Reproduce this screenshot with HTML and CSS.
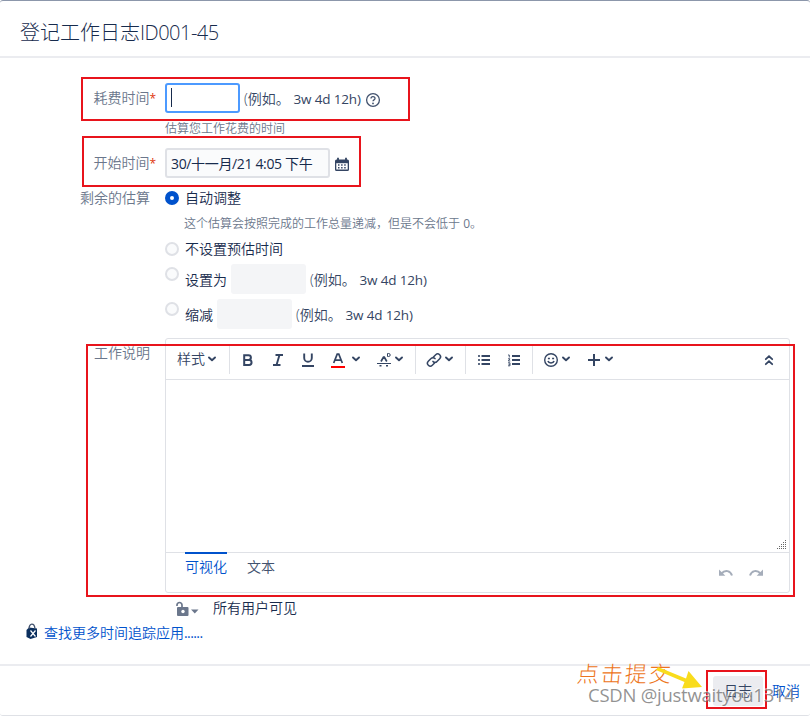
FILE: index.html
```html
<!DOCTYPE html>
<html lang="zh-CN">
<head>
<meta charset="utf-8">
<title>登记工作日志</title>
<link rel="stylesheet" href="styles.css">
</head>
<body>
<svg class="defs" width="0" height="0">
  <symbol id="chev" viewBox="0 0 8 6"><path d="M1 1.5l3 2.7 3-2.7" fill="none" stroke="currentColor" stroke-width="1.9" stroke-linecap="round" stroke-linejoin="round"/></symbol>
</svg>
<div class="dialog">
  <header class="head"><h1>登记工作日志<span class="num">ID001-45</span></h1></header>
  <main class="body">
    <div class="row">
      <label>耗费时间<i class="req">*</i></label>
      <div class="input short focus"><span class="caret"></span></div>
      <span class="hint">(例如。 <span class="lat">3w 4d 12h)</span></span>
      <svg class="help" viewBox="0 0 16 16"><circle cx="8" cy="8" r="6.4" fill="none" stroke="currentColor" stroke-width="1.3"/><path d="M6 6.6C6 4 10 4.1 10 6.4 10 7.9 8 7.8 8 9.3" fill="none" stroke="currentColor" stroke-width="1.3"/><circle cx="8" cy="11.4" r=".9" fill="currentColor"/></svg>
    </div>
    <p class="desc">估算您工作花费的时间</p>
    <div class="row start">
      <label>开始时间<i class="req">*</i></label>
      <div class="input date"><span class="datetext">30/十一月/21 4:05 下午</span></div>
      <svg class="cal" viewBox="0 0 16 16"><path d="M2.5 2.500h11A1.500 1.500 0 0 1 15 4v8.500a1.500 1.500 0 0 1-1.500 1.500h-11A1.500 1.500 0 0 1 1 12.500V4a1.500 1.500 0 0 1 1.500-1.500z" fill="currentColor"/><path d="M2.300 6.200h11.400v6.300H2.300z" fill="#fff"/><path d="M4 .8v3M12 .8v3" stroke="currentColor" stroke-width="1.800"/><path d="M4 8h8.500M4 10.700h8.500" stroke="currentColor" stroke-width="1.500" stroke-dasharray="1.500 1.600"/></svg>
    </div>
    <div class="row option first">
      <label>剩余的估算</label><span class="radio on"></span><span>自动调整</span>
    </div>
    <p class="desc inner">这个估算会按照完成的工作总量递减，但是不会低于 <span class="zero">0</span>。</p>
    <div class="row option"><label></label><span class="radio"></span><span>不设置预估时间</span></div>
    <div class="row value"><label></label><span class="radio"></span><span class="name">设置为</span><div class="disabled"></div><span class="hint">(例如。 <span class="lat">3w 4d 12h)</span></span></div>
    <div class="row value"><label></label><span class="radio"></span><span class="name">缩减</span><div class="disabled"></div><span class="hint">(例如。 <span class="lat">3w 4d 12h)</span></span></div>
    <div class="row comment">
      <label>工作说明</label>
      <section class="editor">
        <div class="toolbar">
          <div class="group styles"><span>样式</span><svg class="chev"><use href="#chev"/></svg></div>
          <div class="group format">
            <svg class="ico" viewBox="0 0 16 16"><path d="M4.200 3.200h4.300a2.400 2.400 0 0 1 0 4.800H4.200zM4.200 8h4.900a2.400 2.400 0 0 1 0 4.900H4.200z" fill="none" stroke="currentColor" stroke-width="2"/></svg>
            <svg class="ico" viewBox="0 0 16 16"><path d="M5.500 3h7.500M3 13h7.500M9.500 3l-3 10" fill="none" stroke="currentColor" stroke-width="1.900"/></svg>
            <svg class="ico" viewBox="0 0 16 16"><path d="M4.200 1.500v4.500a3.800 3.800 0 0 0 7.600 0V1.500" fill="none" stroke="currentColor" stroke-width="1.900"/><path d="M2 14h12" stroke="currentColor" stroke-width="2"/></svg>
            <svg class="ico" viewBox="0 0 16 16"><path d="M3.700 11L7.200 2.200h1.600L12.300 11M5 8.200h6" fill="none" stroke="currentColor" stroke-width="1.700"/><path d="M1 15h14" stroke="#f00" stroke-width="2"/></svg>
            <svg class="chev color"><use href="#chev"/></svg>
            <svg class="ico more" viewBox="0 0 16 16"><path d="M5 9.500L7.500 5h.8l2.500 4.500" fill="none" stroke="currentColor" stroke-width="1.700"/><path d="M1 11.500h14" stroke="currentColor" stroke-width="1"/><path d="M3.500 13.800h2M10 13.800h2" stroke="currentColor" stroke-width="1.500"/><path d="M11.500 1.500h1.200a1.500 1.500 0 0 1 0 3h-1.200z" fill="none" stroke="currentColor"/></svg>
            <svg class="chev"><use href="#chev"/></svg>
          </div>
          <div class="group link">
            <svg class="ico" viewBox="0 0 16 16"><g fill="none" stroke="currentColor" stroke-width="1.500" stroke-linecap="round"><path d="M7.200 5.300l2.500-2.500a2.700 2.700 0 0 1 4 3.900L11 9.400a2.600 2.600 0 0 1-4 0"/><path d="M8.800 10.700l-2.500 2.500a2.700 2.700 0 0 1-4-3.900L5 6.600a2.600 2.600 0 0 1 4 0"/></g></svg>
            <svg class="chev"><use href="#chev"/></svg>
          </div>
          <div class="group lists">
            <svg class="ico" viewBox="0 0 16 16"><path d="M5.500 4H14M5.500 8H14M5.500 12H14" stroke="currentColor" stroke-width="1.800"/><path d="M2 4h2M2 8h2M2 12h2" stroke="currentColor" stroke-width="1.800" opacity=".8"/></svg>
            <svg class="ico" viewBox="0 0 16 16"><path d="M6 4h8M6 8h8M6 12h8" stroke="currentColor" stroke-width="1.800"/><path d="M2 3h1.300v2.500M2 6.800h2L2.300 9h2M2 10.800h2v3H2M2.500 12.300H4" fill="none" stroke="currentColor" stroke-width=".9"/></svg>
          </div>
          <div class="group insert">
            <svg class="ico" viewBox="0 0 16 16"><circle cx="8" cy="8" r="6.300" fill="none" stroke="currentColor" stroke-width="1.400"/><path d="M4.900 6.500h2M9.100 6.500h2M4.900 9c.8 2.600 5.400 2.600 6.200 0" fill="none" stroke="currentColor" stroke-width="1.500"/></svg>
            <svg class="chev"><use href="#chev"/></svg>
            <svg class="ico plus" viewBox="0 0 16 16"><path d="M8 2v12M2 8h12" stroke="currentColor" stroke-width="2"/></svg>
            <svg class="chev"><use href="#chev"/></svg>
          </div>
          <svg class="ico collapse" viewBox="0 0 16 16"><path d="M4.800 7.200L8 4.300l3.200 2.900M4.800 12.200L8 9.300l3.200 2.900" fill="none" stroke="currentColor" stroke-width="1.800" stroke-linecap="round"/></svg>
        </div>
        <div class="area">
          <svg class="grip" viewBox="0 0 10 10"><path d="M9 .5h1M7 2.500h3M5 4.500h5M3 6.500h7M1 8.500h9" stroke="#666" stroke-dasharray="1 1"/></svg>
        </div>
        <div class="tabs">
          <span class="tab active">可视化</span><span class="tab">文本</span>
          <svg class="undo" viewBox="0 0 16 10"><path d="M3.500 5.500C7 1.500 12.500 2.500 14 7.500" fill="none" stroke="currentColor" stroke-width="2"/><path d="M1 1.500v6.300h6.300z" fill="currentColor"/></svg>
          <svg class="redo" viewBox="0 0 16 10"><path d="M12.500 5.500C9 1.500 3.500 2.500 2 7.500" fill="none" stroke="currentColor" stroke-width="2"/><path d="M15 1.500v6.300H8.700z" fill="currentColor"/></svg>
        </div>
      </section>
    </div>
    <div class="visibility">
      <svg class="lock" viewBox="0 0 24 16"><path d="M2 5V4a2.500 2.500 0 0 1 5 0v3" fill="none" stroke="currentColor" stroke-width="1.700"/><path d="M3 6h9.500q1 0 1 1v7q0 1-1 1H3q-1 0-1-1V7q0-1 1-1z" fill="currentColor"/><circle cx="8" cy="10.500" r="1.700" fill="#fff"/><path d="M16 8.500h7.500L19.750 12.500z" fill="currentColor"/></svg>
      <span>所有用户可见</span>
    </div>
    <div class="apps">
      <svg class="bag" viewBox="0 0 12 16"><path d="M.5 7l2.500-2.500L11 5.500v8.500l-6.500 2L.5 14z" fill="#0b2f5e"/><path d="M3 6C3-.5 8.500-.5 9 6" fill="none" stroke="#42526e" stroke-width="1.300"/><path d="M4.500 7.500l5 6M9.500 7.500l-5 6" stroke="#fff" stroke-width="1.200"/></svg>
      <a>查找更多时间追踪应用<span class="dots">......</span></a>
    </div>
  </main>
  <footer class="foot"><span class="submit">日志</span><a>取消</a></footer>
</div>
<div class="mark m1"></div><div class="mark m2"></div><div class="mark m3"></div><div class="mark m4"></div>
<div class="note">点击提交</div>
<svg class="arrow" viewBox="0 0 50 28"><path d="M1 4L3 1 31 12.500 33.500 5 47 21 27 22.500 29.500 16z" fill="#f9dc1c"/></svg>
<div class="watermark">CSDN @justwaityou1314</div>
</body>
</html>
```
FILE: styles.css
```css
* { box-sizing: border-box; }
body {
  margin: 0;
  height: 716px;
  overflow: hidden;
  position: relative;
  background: #fff;
  color: #172b4d;
  font: 350 14px/20px "Open Sans", "Noto Sans CJK SC", sans-serif;
  white-space: nowrap;
}
svg { display: block; flex: none; }
.defs { position: absolute; }
.dialog {
  height: 716px;
  border-top: 1px solid #8c97ab;
  border-bottom: 1px solid #dfe1e6;
  border-radius: 3px;
  display: flex;
  flex-direction: column;
}
.head { height: 57px; border-bottom: 2px solid #ebecf0; padding: 17px 20px 0; }
h1 { margin: 0; font-size: 20px; line-height: 30px; font-weight: 300; }
.num { font-size: 20px; letter-spacing: -.5px; }
.body { height: 606px; padding-top: 25px; }
.row { display: flex; align-items: center; }
.row > label { width: 150px; margin-right: 15px; text-align: right; color: #6b778c; flex: none; height: 20px; }
.req { color: #de350b; font-style: normal; font-weight: 400; font-size: 12px; margin-right: -6px; }
.input { height: 30px; border: 2px solid #dfe1e6; border-radius: 3px; background: #fafbfc; padding: 3px 4px; }
.short { width: 75px; }
.focus { border-color: #4c9aff; background: #fff; }
.caret { display: block; width: 1px; height: 19px; background: #172b4d; }
.hint { margin-left: 4px; padding-top: 2px; color: #344563; }
.lat { font-size: 13.500px; font-weight: 400; letter-spacing: -.15px; }
.help { width: 16px; height: 16px; margin: 3px 0 0 4px; color: #42526e; }
.desc { margin: 0 0 5px 165px; height: 30px; font-size: 12px; line-height: 32px; color: #6b778c; }
.zero { font-weight: 400; }
.date { width: 165px; padding-top: 4px; }
.datetext { font-size: 14px; font-weight: 400; letter-spacing: -.35px; }
.cal { width: 16px; height: 16px; margin: 4px 0 0 4px; color: #344563; }
.option { height: 20px; }
.first { margin-top: 10px; }
.desc.inner { margin: 0 0 1px 184px; }
.radio { width: 14px; height: 14px; border: 2px solid #dfe1e6; border-radius: 50%; background: #fafbfc; margin-right: 6px; flex: none; }
.radio.on { border: 5px solid #0052cc; background: #fff; }
.value { height: 30px; margin-top: 5px; }
.value .radio { align-self: flex-start; margin-top: 3px; }
.name { padding-top: 2px; }
.disabled { width: 75px; height: 30px; border-radius: 3px; background: #f4f5f7; margin-left: 4px; }
.comment { margin-top: 9px; align-items: flex-start; }
.comment label { padding-top: 5px; }
.editor { width: 625px; height: 255px; border: 1px solid #dfe1e6; border-radius: 3px; }
.toolbar { height: 41px; border-bottom: 1px solid #dfe1e6; display: flex; align-items: center; color: #344563; }
.group { height: 29px; border-right: 1px solid #dfe1e6; display: flex; align-items: center; }
.ico { width: 16px; height: 16px; margin-top: 2px; }
.chev { width: 8px; height: 6px; margin-left: 3px; }
.styles { width: 64px; padding-left: 11px; }
.format { width: 186px; padding-left: 10px; }
.format .ico + .ico, .lists .ico + .ico { margin-left: 14px; }
.format .color { margin-left: 6px; }
.format .more { margin-left: 16px; }
.link { width: 50px; padding-left: 10px; }
.lists { width: 67px; padding-left: 10px; }
.insert { border: 0; padding-left: 10px; }
.plus { margin-left: 16px; }
.collapse { margin-left: auto; margin-right: 12px; }
.area { height: 172px; display: flex; justify-content: flex-end; align-items: flex-end; padding: 0 3px 2px; }
.grip { width: 10px; height: 10px; }
.tabs { height: 40px; border-top: 1px solid #dfe1e6; padding-left: 19px; display: flex; color: #42526e; }
.tab { margin-top: -1px; padding-top: 3px; height: 36px; border-top: 2px solid transparent; margin-right: 20px; }
.tab.active { color: #0052cc; border-color: #0052cc; }
.undo, .redo { width: 16px; height: 10px; margin-top: 15px; color: #a5adba; }
.undo { margin-left: auto; }
.redo { margin: 15px 25px 0 14px; }
.visibility { display: flex; align-items: center; height: 20px; margin: 5px 0 0 175px; }
.lock { width: 24px; height: 16px; color: #6b778c; margin: 2px 14px 0 0; }
.apps { display: flex; align-items: center; height: 20px; margin: 5px 0 0 26px; }
.bag { width: 12px; height: 16px; margin-right: 6px; margin-top: -4px; }
.dots { font-weight: 400; letter-spacing: -.6px; }
a { color: #0052cc; }
.foot { height: 51px; border-top: 2px solid #ebecf0; display: flex; align-items: flex-start; justify-content: flex-end; padding: 10px 10px 0 0; line-height: 30px; }
.submit { width: 50px; height: 30px; border-radius: 3px; background: #ebecf0; color: #344563; text-align: center; margin-right: 9px; }
.mark { position: absolute; border: 2px solid #e8141c; }
.m1 { left: 81px; top: 77px; width: 329px; height: 44px; }
.m2 { left: 82px; top: 136px; width: 279px; height: 51px; }
.m3 { left: 86px; top: 344px; width: 709px; height: 253px; }
.m4 { left: 706px; top: 670px; width: 61px; height: 39px; }
.note { position: absolute; left: 577px; top: 657px; font: 300 22px/30px "Noto Sans CJK SC", sans-serif; letter-spacing: 2px; color: #ed7420; transform: skewX(-5deg); }
.arrow { position: absolute; left: 655px; top: 666px; width: 50px; height: 28px; }
.watermark { position: absolute; left: 588px; top: 681px; font: 18.500px/28px "Open Sans", sans-serif; letter-spacing: -.25px; color: rgba(110, 110, 110, .75); text-shadow: -1px -1px 0 rgba(255, 255, 255, .6); }
```
